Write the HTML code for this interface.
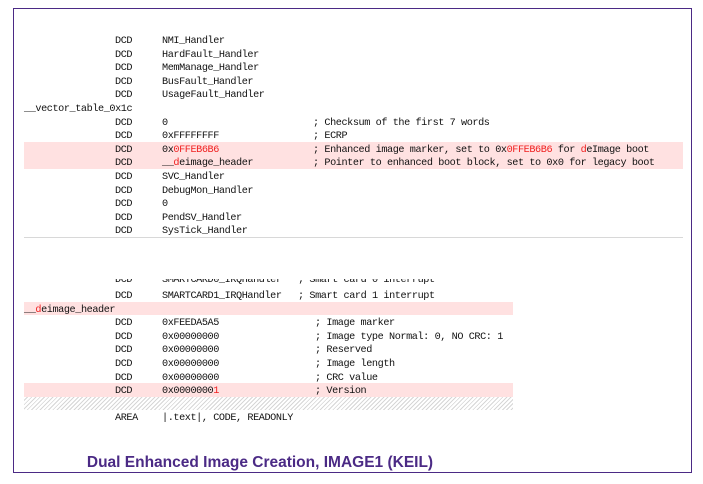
<!DOCTYPE html>
<html><head><style>
body{margin:0;width:703px;height:484px;background:#fff;position:relative;overflow:hidden;font-family:"Liberation Mono",monospace;font-size:10.2px;letter-spacing:-0.42px;color:#111}
.box{position:absolute;left:13px;top:8px;width:679px;height:465px;border:1.5px solid #4b2a85;box-sizing:border-box}
.r{position:absolute;left:24px;height:13.6px;line-height:17px;white-space:pre}
.pk{background:#ffe1e1}
span.a{position:absolute;left:91px}
span.b{position:absolute;left:138px}
span.c{position:absolute;left:289px}
.red{color:#f02020}
.cap{position:absolute;left:0;width:520px;top:454px;text-align:center;font-family:"Liberation Sans",sans-serif;font-weight:bold;font-size:15.5px;letter-spacing:0;color:#4b2a85}
</style></head><body>
<div class="box"></div>
<div class="r" style="top:33px"><span class="a">DCD</span><span class="b">NMI_Handler</span></div>
<div class="r" style="top:46.6px"><span class="a">DCD</span><span class="b">HardFault_Handler</span></div>
<div class="r" style="top:60.2px"><span class="a">DCD</span><span class="b">MemManage_Handler</span></div>
<div class="r" style="top:73.8px"><span class="a">DCD</span><span class="b">BusFault_Handler</span></div>
<div class="r" style="top:87.4px"><span class="a">DCD</span><span class="b">UsageFault_Handler</span></div>
<div class="r" style="top:101px">__vector_table_0x1c</div>
<div class="r" style="top:114.6px"><span class="a">DCD</span><span class="b">0</span><span class="c">; Checksum of the first 7 words</span></div>
<div class="r" style="top:128.2px"><span class="a">DCD</span><span class="b">0xFFFFFFFF</span><span class="c">; ECRP</span></div>
<div class="r pk" style="top:141.8px;width:659px"><span class="a">DCD</span><span class="b">0x<span class="red">0FFEB6B6</span></span><span class="c">; Enhanced image marker, set to 0x<span class="red">0FFEB6B6</span> for <span class="red">d</span>eImage boot</span></div>
<div class="r pk" style="top:155.4px;width:659px"><span class="a">DCD</span><span class="b">__<span class="red">d</span>eimage_header</span><span class="c">; Pointer to enhanced boot block, set to 0x0 for legacy boot</span></div>
<div class="r" style="top:169px"><span class="a">DCD</span><span class="b">SVC_Handler</span></div>
<div class="r" style="top:182.6px"><span class="a">DCD</span><span class="b">DebugMon_Handler</span></div>
<div class="r" style="top:196.2px"><span class="a">DCD</span><span class="b">0</span></div>
<div class="r" style="top:209.8px"><span class="a">DCD</span><span class="b">PendSV_Handler</span></div>
<div class="r" style="top:223.4px"><span class="a">DCD</span><span class="b">SysTick_Handler</span></div>
<div style="position:absolute;left:24px;top:237px;width:659px;height:1px;background:#d8d8d8"></div>
<div style="position:absolute;left:24px;top:279px;width:500px;height:7px;overflow:hidden"><div class="r" style="top:-7px;left:0"><span class="a">DCD</span><span class="b">SMARTCARD0_IRQHandler</span><span style="position:absolute;left:274px">; Smart card 0 interrupt</span></div></div>
<div class="r" style="top:288px"><span class="a">DCD</span><span class="b">SMARTCARD1_IRQHandler</span><span style="position:absolute;left:274px">; Smart card 1 interrupt</span></div>
<div class="r pk" style="top:301.6px;width:489px">__<span class="red">d</span>eimage_header</div>
<div class="r" style="top:315.2px"><span class="a">DCD</span><span class="b">0xFEEDA5A5</span><span class="c" style="left:291px">; Image marker</span></div>
<div class="r" style="top:328.8px"><span class="a">DCD</span><span class="b">0x00000000</span><span class="c" style="left:291px">; Image type Normal: 0, NO CRC: 1</span></div>
<div class="r" style="top:342.4px"><span class="a">DCD</span><span class="b">0x00000000</span><span class="c" style="left:291px">; Reserved</span></div>
<div class="r" style="top:356px"><span class="a">DCD</span><span class="b">0x00000000</span><span class="c" style="left:291px">; Image length</span></div>
<div class="r" style="top:369.6px"><span class="a">DCD</span><span class="b">0x00000000</span><span class="c" style="left:291px">; CRC value</span></div>
<div class="r pk" style="top:383.2px;width:489px"><span class="a">DCD</span><span class="b">0x0000000<span class="red">1</span></span><span class="c" style="left:291px">; Version</span></div>
<div style="position:absolute;left:24px;top:397px;width:489px;height:13px;background:repeating-linear-gradient(135deg,#fff 0 2px,#d6d6d6 2px 3px)"></div>
<div class="r" style="top:410px"><span class="a">AREA</span><span class="b">|.text|, CODE, READONLY</span></div>
<div class="cap">Dual Enhanced Image Creation, IMAGE1 (KEIL)</div>
</body></html>
